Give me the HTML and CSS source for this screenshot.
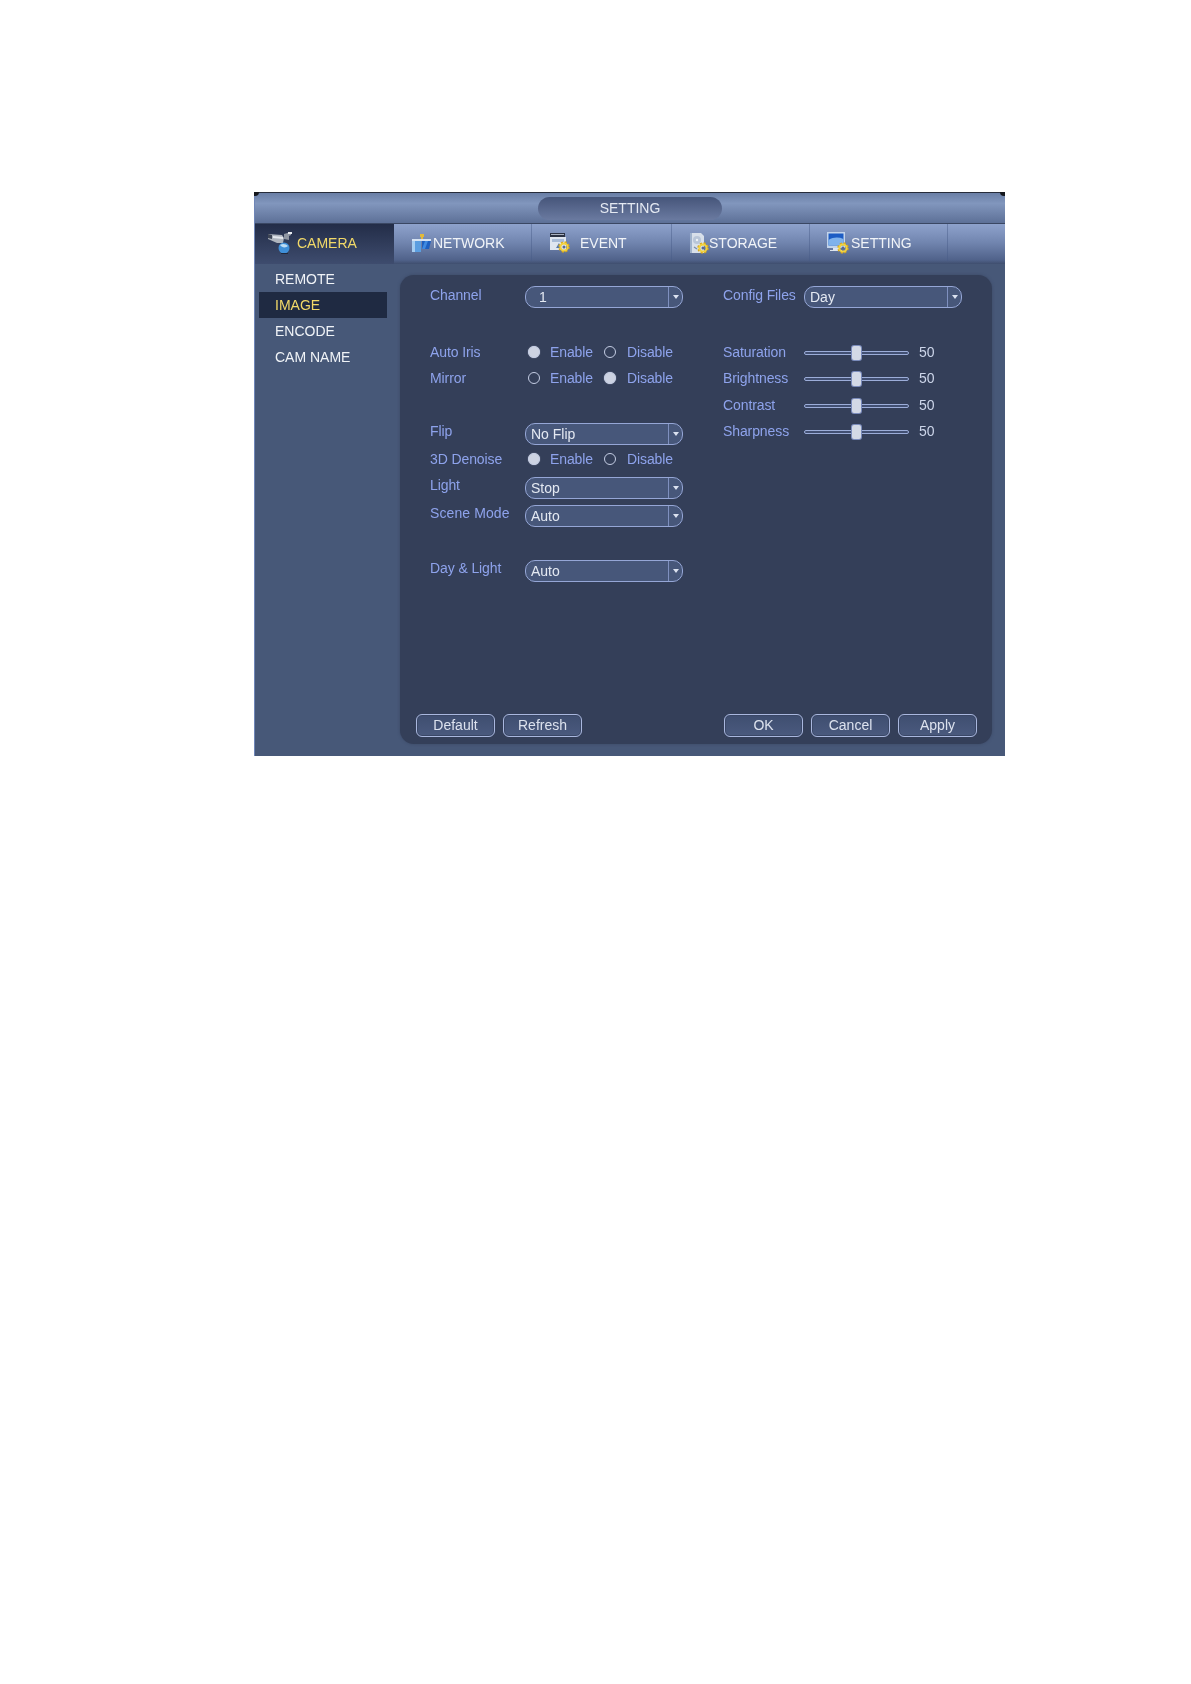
FILE: index.html
```html
<!DOCTYPE html>
<html lang="en">
<head>
    <meta charset="UTF-8">
    <title>Setting | Camera Image</title>
    <link rel="stylesheet" href="styles.css">
</head>
<body>
    <svg class="defs" width="0" height="0">
        <symbol id="gear" viewBox="0 0 12 12">
            <circle cx="6" cy="6" r="4.4" fill="none" stroke="#d9a81c" stroke-width="2.6" stroke-dasharray="2 1.45"/>
            <circle cx="6" cy="6" r="3.6" fill="none" stroke="#f3d23c" stroke-width="2"/>
            <circle cx="6" cy="6" r="1.5" fill="#5a6a8c"/>
        </symbol>
    </svg>

    <div class="window">
        <div class="title-bar">
            <div class="title-pill">SETTING</div>
        </div>

        <div class="tabs">
            <div class="tab tab-active">
                <svg class="tab-icon" width="27" height="23" viewBox="0 0 27 23">
                    <path d="M1 3l14 1 2 3-1 5-6 0-9-4z" fill="#aeb4bd"/>
                    <path d="M1 3l4 1 0 4-4-1z" fill="#3c4454"/>
                    <path d="M6 5l10 1 0 2-10-1z" fill="#e4e8ee"/>
                    <path d="M17 3l7-2 0 3-2 1 0 4-5-1z" fill="#8f96a2"/>
                    <path d="M21 1h4v2h-4z" fill="#e8ebf0"/>
                    <circle cx="17" cy="17" r="5.5" fill="#3f8fd8"/>
                    <path d="M13 14c3-2 6-1 8 1-2 2-6 2-8-1z" fill="#bcdcf4"/>
                    <path d="M14 22h7v1h-7z" fill="#20283a"/>
                </svg>
                <span>CAMERA</span>
            </div>
            <div class="tab">
                <svg class="tab-icon" width="21" height="21" viewBox="0 0 21 21">
                    <path d="M9 2h4v3h-1v2h-2v-2h-1z" fill="#e2b93a"/>
                    <path d="M1 7h19v2h-19z" fill="#d5e2f2"/>
                    <path d="M1 9h9v11h-9z" fill="#5b9ee0"/>
                    <path d="M1 9h3v11h-3z" fill="#a6cdf0"/>
                    <path d="M11 9h9l-2 8h-7z" fill="#1d5fc0"/>
                    <path d="M14 9h3l-3 8h-3z" fill="#3f8ae0"/>
                </svg>
                <span>NETWORK</span>
            </div>
            <div class="tab tab-event">
                <svg class="tab-icon" width="21" height="21" viewBox="0 0 21 21">
                    <path d="M1 1h15v4h-15z" fill="#2c3344"/>
                    <path d="M2 2h13v1h-13z" fill="#aab2c0"/>
                    <path d="M1 5h16v13h-16z" fill="#dfe6f0"/>
                    <path d="M3 7h12v3h-12z" fill="#a9bcd8"/>
                    <path d="M7 16l3-5 2 5z" fill="#5577aa"/>
                    <use href="#gear" x="9" y="9" width="12" height="12"/>
                </svg>
                <span>EVENT</span>
            </div>
            <div class="tab tab-storage">
                <svg class="tab-icon" width="20" height="22" viewBox="0 0 20 22">
                    <path d="M1 1h11l3 3v17h-14z" fill="#d8e0ea"/>
                    <path d="M1 1h2v20h-2z" fill="#9fb2cc"/>
                    <circle cx="8" cy="8" r="4" fill="#b9c6d8"/>
                    <circle cx="8" cy="8" r="1.2" fill="#eef2f7"/>
                    <path d="M5 15l3 2" stroke="#7c8ea8" stroke-width="1.4"/>
                    <use href="#gear" x="8" y="10" width="12" height="12"/>
                </svg>
                <span>STORAGE</span>
            </div>
            <div class="tab tab-setting">
                <svg class="tab-icon" width="22" height="22" viewBox="0 0 22 22">
                    <path d="M0 0h18v16h-18z" fill="#c3d4ea"/>
                    <path d="M1.500 1.500h15v12h-15z" fill="#1c5cc4"/>
                    <path d="M1.500 8c5-3 10-3 15-1v6.500h-15z" fill="#7fb2ec"/>
                    <path d="M6 16h6v2h3v1h-12v-1h3z" fill="#dde4ee"/>
                    <use href="#gear" x="10" y="10" width="12" height="12"/>
                </svg>
                <span>SETTING</span>
            </div>
        </div>

        <div class="content">
            <div class="sidebar">
                <div class="side-item">REMOTE</div>
                <div class="side-item side-active">IMAGE</div>
                <div class="side-item">ENCODE</div>
                <div class="side-item">CAM NAME</div>
            </div>

            <div class="panel">
                <div class="form">
                    <div class="col-left">
                        <div class="row select-row">
                            <div class="label">Channel</div>
                            <div class="select"><span class="select-text select-num">1</span><span class="select-btn"></span></div>
                        </div>
                        <div class="row gap-big">
                            <div class="label">Auto Iris</div>
                            <div class="radio-opt"><span class="radio on"></span>Enable</div>
                            <div class="radio-opt"><span class="radio"></span>Disable</div>
                        </div>
                        <div class="row">
                            <div class="label">Mirror</div>
                            <div class="radio-opt"><span class="radio"></span>Enable</div>
                            <div class="radio-opt"><span class="radio on"></span>Disable</div>
                        </div>
                        <div class="row select-row select-low gap-big">
                            <div class="label">Flip</div>
                            <div class="select"><span class="select-text">No Flip</span><span class="select-btn"></span></div>
                        </div>
                        <div class="row">
                            <div class="label">3D Denoise</div>
                            <div class="radio-opt"><span class="radio on"></span>Enable</div>
                            <div class="radio-opt"><span class="radio"></span>Disable</div>
                        </div>
                        <div class="row select-row select-low gap-small">
                            <div class="label">Light</div>
                            <div class="select"><span class="select-text">Stop</span><span class="select-btn"></span></div>
                        </div>
                        <div class="row select-row select-low gap-small">
                            <div class="label label-wide">Scene Mode</div>
                            <div class="select"><span class="select-text">Auto</span><span class="select-btn"></span></div>
                        </div>
                        <div class="row select-row select-low gap-big">
                            <div class="label">Day &amp; Light</div>
                            <div class="select"><span class="select-text">Auto</span><span class="select-btn"></span></div>
                        </div>
                    </div>

                    <div class="col-right">
                        <div class="row select-row">
                            <div class="label">Config Files</div>
                            <div class="select"><span class="select-text">Day</span><span class="select-btn"></span></div>
                        </div>
                        <div class="row gap-big">
                            <div class="label">Saturation</div>
                            <div class="slider"><span class="handle"></span></div>
                            <div class="value">50</div>
                        </div>
                        <div class="row">
                            <div class="label">Brightness</div>
                            <div class="slider"><span class="handle"></span></div>
                            <div class="value">50</div>
                        </div>
                        <div class="row gap-one">
                            <div class="label">Contrast</div>
                            <div class="slider"><span class="handle"></span></div>
                            <div class="value">50</div>
                        </div>
                        <div class="row">
                            <div class="label">Sharpness</div>
                            <div class="slider"><span class="handle"></span></div>
                            <div class="value">50</div>
                        </div>
                    </div>
                </div>

                <div class="buttons">
                    <div class="btn-group">
                        <div class="btn">Default</div>
                        <div class="btn">Refresh</div>
                    </div>
                    <div class="btn-group">
                        <div class="btn">OK</div>
                        <div class="btn">Cancel</div>
                        <div class="btn">Apply</div>
                    </div>
                </div>
            </div>
        </div>
    </div>
</body>
</html>
```

FILE: styles.css
```css
:root {
    --label: #8ea3ec;
    --light-text: #e4e9f2;
    --yellow: #f2d968;
    --side: #475878;
    --panel: #343f59;
    --field: #47577a;
    --edge: #95a6d6;
}

body {
    margin: 0;
    background-color: #fff;
    font-family: "Liberation Sans", Arial, sans-serif;
    font-size: 14px;
}

.defs {
    position: absolute;
}

/* the reference is a soft, scaled capture */
.window {
    width: 751px;
    height: 564px;
    margin: 192px 0 0 254px;
    display: flex;
    flex-direction: column;
    position: relative;
    background-color: var(--side);
    border-left: 1px solid #6f86b8;
    box-sizing: border-box;
    filter: blur(0.3px);
}

/* the little black corners of the captured window */
.window::before,
.window::after {
    content: "";
    position: absolute;
    top: 0;
    width: 5px;
    height: 4px;
    background-color: #14161c;
}

.window::before {
    left: -1px;
    border-bottom-right-radius: 5px;
}

.window::after {
    right: 0;
    border-bottom-left-radius: 5px;
}

.title-bar {
    height: 32px;
    box-sizing: border-box;
    display: flex;
    justify-content: center;
    align-items: center;
    border-top: 1px solid #262c3a;
    border-bottom: 1px solid #3a4763;
    background: linear-gradient(#6a7fa6, #8196bd 35%, #5d7097);
}

.title-pill {
    width: 184px;
    height: 23px;
    line-height: 23px;
    text-align: center;
    border-radius: 12px;
    color: var(--light-text);
    background: linear-gradient(#46557a, #6a7aa0);
}

.tabs {
    height: 40px;
    padding-bottom: 3px;
    display: flex;
    box-sizing: border-box;
    background: linear-gradient(#8ea2cc, #7286b0 45%, #50628a 90%, #3f4e6e);
    color: #f1f4f8;
}

.tab {
    width: 138px;
    box-sizing: border-box;
    padding-left: 17px;
    display: flex;
    align-items: center;
    border-right: 1px solid rgba(70, 90, 135, 0.45);
}

.tab-icon {
    margin-right: 1px;
    flex: none;
}

.tab-active {
    width: 139px;
    margin-bottom: -3px;
    padding: 0 0 3px 12px;
    color: var(--yellow);
    border-right: none;
    background: linear-gradient(#232d48, #3e4c6e);
}

.tab-active .tab-icon {
    margin-right: 3px;
}

.tab-event {
    width: 140px;
}

.tab-event .tab-icon {
    margin-right: 10px;
}

.tab-storage .tab-icon {
    margin-right: 0;
}

.tab-setting .tab-icon {
    margin-right: 2px;
}

.content {
    flex: 1;
    display: flex;
    min-height: 0;
}

.sidebar {
    width: 145px;
    padding-top: 2px;
    box-sizing: border-box;
}

.side-item {
    width: 128px;
    height: 26px;
    line-height: 26px;
    margin-left: 4px;
    padding-left: 16px;
    box-sizing: border-box;
    color: #f0f3f7;
}

.side-active {
    background-color: #1f2a42;
    color: var(--yellow);
}

.panel {
    flex: 1;
    margin: 11px 13px 12px 0;
    padding: 9px 15px 7px 16px;
    display: flex;
    flex-direction: column;
    justify-content: space-between;
    border-radius: 14px;
    background-color: var(--panel);
    box-shadow: 0 0 3px #3a4763;
}

.form {
    display: flex;
    padding-left: 14px;
}

.col-left {
    width: 293px;
}

.row {
    height: 26px;
    display: flex;
    align-items: center;
    color: var(--label);
}

.gap-big {
    margin-top: 29px;
}

.gap-small {
    margin-top: 2px;
}

.gap-one {
    margin-top: 1px;
}

.label {
    width: 95px;
    flex: none;
    letter-spacing: -0.1px;
    white-space: nowrap;
}

.label-wide {
    letter-spacing: 0.1px;
}

.select-row .label {
    margin-bottom: 4px;
}

.col-right .label {
    width: 81px;
}

.select {
    width: 158px;
    height: 22px;
    box-sizing: border-box;
    display: flex;
    border: 1.5px solid var(--edge);
    border-radius: 10px;
    background-color: var(--field);
    color: var(--light-text);
}

.select-low .select {
    margin-top: 2px;
}

.select-text {
    flex: 1;
    padding-left: 5px;
    line-height: 20px;
}

.select-num {
    padding-left: 13px;
}

.select-btn {
    width: 13px;
    position: relative;
    border-left: 1px solid #7f90bf;
}

.select-btn::after {
    content: "";
    position: absolute;
    top: 8px;
    left: 4px;
    border-left: 3.500px solid transparent;
    border-right: 3.500px solid transparent;
    border-top: 4px solid #dbe2f0;
}

.radio-opt {
    width: 77px;
    flex: none;
    display: flex;
    align-items: center;
    letter-spacing: -0.1px;
}

.radio-opt:nth-child(2) {
    width: 76px;
    margin-left: 3px;
}

.radio-opt:nth-child(2) .radio {
    margin-right: 10px;
}

.radio {
    width: 10px;
    height: 10px;
    margin-right: 11px;
    border: 1px solid #c4cde4;
    border-radius: 50%;
    flex: none;
}

.radio.on {
    background-color: #cdd3e2;
    box-shadow: 0 0 1px #cdd3e2;
}

.slider {
    width: 105px;
    height: 4px;
    margin-top: 2px;
    position: relative;
    border: 1px solid #9cadd9;
    border-radius: 2px;
    box-sizing: border-box;
    background-color: #414f72;
}

.handle {
    position: absolute;
    top: -6px;
    left: 50%;
    width: 9px;
    height: 14px;
    margin-left: -5px;
    border-radius: 2px;
    background-color: #d3d9e6;
    box-shadow: 0 0 0 1px #7a8bbb;
}

.value {
    margin-left: 10px;
    color: #ccd5e9;
}

.buttons {
    display: flex;
    justify-content: space-between;
}

.btn-group {
    display: flex;
    gap: 8px;
}

.btn {
    width: 79px;
    height: 23px;
    line-height: 21px;
    box-sizing: border-box;
    text-align: center;
    border: 1px solid #a9b7de;
    border-radius: 6px;
    background: linear-gradient(#3f4e70, #4a5a7e);
    color: #dce2ee;
    box-shadow: inset 0 0 0 1px #3a4766;
}
```
